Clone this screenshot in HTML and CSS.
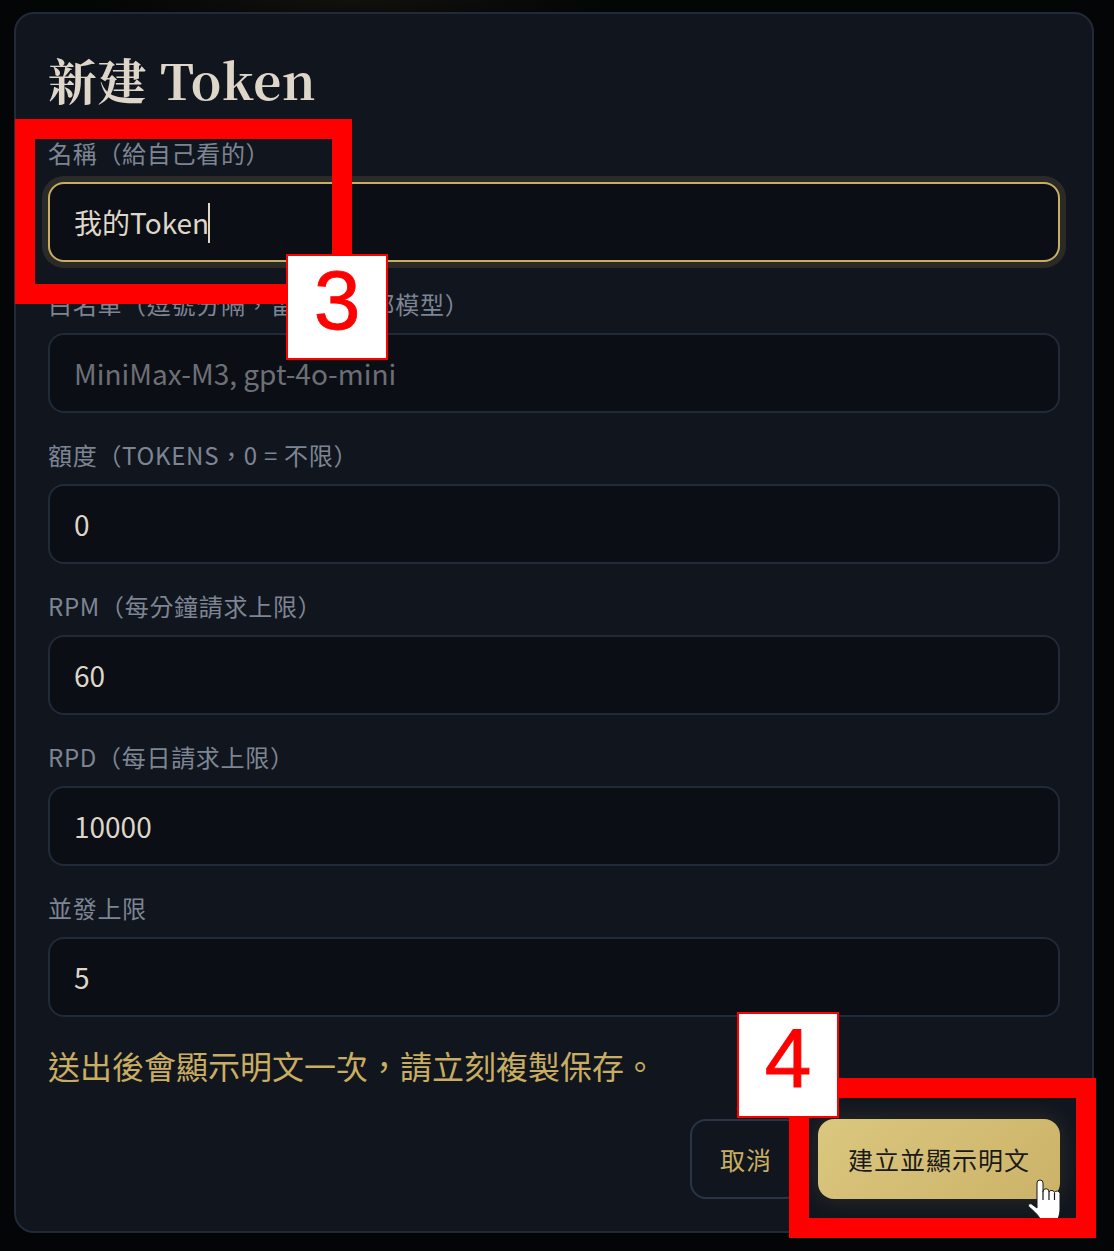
FILE: index.html
```html
<!DOCTYPE html>
<html lang="zh-TW">
<head>
<meta charset="utf-8">
<title>新建 Token</title>
<link rel="stylesheet" href="styles.css">
</head>
<body>
<main class="panel">
  <h1 class="title">新建 Token</h1>
  <div class="field">
    <label class="label">名稱（給自己看的）</label>
    <div class="input input-focus">我的Token<span class="caret"></span></div>
  </div>
  <div class="field">
    <label class="label">白名單（逗號分隔，留空 = 全部模型）</label>
    <input class="input" placeholder="MiniMax-M3, gpt-4o-mini">
  </div>
  <div class="field">
    <label class="label">額度（tokens，0 = 不限）</label>
    <input class="input" value="0">
  </div>
  <div class="field">
    <label class="label">RPM（每分鐘請求上限）</label>
    <input class="input" value="60">
  </div>
  <div class="field">
    <label class="label">RPD（每日請求上限）</label>
    <input class="input" value="10000">
  </div>
  <div class="field">
    <label class="label">並發上限</label>
    <input class="input" value="5">
  </div>
  <p class="note">送出後會顯示明文一次，請立刻複製保存。</p>
  <div class="actions">
    <button class="btn btn-ghost">取消</button>
    <button class="btn btn-primary">建立並顯示明文</button>
  </div>
</main>
<svg class="hand" viewBox="0 0 34 40" aria-hidden="true">
  <path d="M10 4a3 3 0 0 1 6 0v8.5a3 3 0 0 1 6 .5a3 3 0 0 1 5.5 .5a3 3 0 0 1 5.5 1V30c0 4-1 7-2 10H13c-1-3-5-7-11-12c-1.500-2 .5-4 2.500-3L10 29Z" fill="#fff" stroke="#15171b" stroke-width="1"/>
  <path d="M16 12v9M22 13v8M27.500 14v7" fill="none" stroke="#15171b" stroke-width="1.200"/>
</svg>
<div class="mark mark-3"></div>
<div class="badge badge-3">3</div>
<div class="mark mark-4"></div>
<div class="badge badge-4">4</div>
</body>
</html>
```
FILE: styles.css
```css
* { box-sizing: border-box; }
html, body { margin: 0; height: 1251px; overflow: hidden; }
body {
  position: relative;
  background:
    radial-gradient(ellipse 260px 30px at 350px 0, rgba(201, 173, 98, .07), transparent),
    #040507;
  font-family: "Noto Sans CJK TC", "Noto Sans", sans-serif;
  text-spacing-trim: space-all;
}
.panel {
  width: 1080px;
  height: 1221px;
  margin: 12px 0 0 14px;
  padding: 35px 32px 0;
  background: #11161e;
  border: 2px solid #202a38;
  border-radius: 20px;
}
.title {
  margin: 0 0 26px;
  height: 60px;
  line-height: 60px;
  font-family: "Noto Serif CJK TC", "Liberation Serif", serif;
  font-size: 49px;
  font-weight: 700;
  letter-spacing: 0.6px;
  color: #ddd6c9;
}
.field { margin-bottom: 24px; }
.label {
  display: block;
  height: 36px;
  line-height: 36px;
  margin-bottom: 11px;
  font-size: 24px;
  letter-spacing: 0.7px;
  text-transform: uppercase;
  color: #7d8594;
}
.input {
  display: block;
  width: 100%;
  height: 80px;
  padding: 0 24px;
  line-height: 76px;
  font-family: inherit;
  font-size: 28px;
  color: #ddd6c9;
  background: #0b0e14;
  border: 2px solid #202a38;
  border-radius: 16px;
  outline: none;
}
.input::placeholder { color: #6c7076; opacity: 1; }
.input-focus {
  border-color: #c9ad62;
  box-shadow: 0 0 0 6px rgba(201, 173, 98, .14);
}
.caret {
  display: inline-block;
  width: 2px;
  height: 40px;
  margin-left: -1px;
  vertical-align: -9px;
  background: #ddd6c9;
}
.note {
  margin: -1px 0 0;
  height: 50px;
  line-height: 50px;
  font-size: 32px;
  color: #c9ad62;
}
.actions {
  display: flex;
  justify-content: flex-end;
  gap: 16px;
  margin-top: 29px;
}
.btn {
  height: 80px;
  padding: 0 28px;
  font-family: inherit;
  font-size: 25px;
  letter-spacing: 1px;
  border-radius: 16px;
  border: 2px solid transparent;
}
.btn-ghost {
  background: transparent;
  border-color: #2a3545;
  color: #c9ad62;
}
.btn-primary {
  color: #1a1a18;
  background: linear-gradient(135deg, #dbc77e, #ccb269) border-box;
  box-shadow: 0 0 24px rgba(201, 173, 98, .16);
}
.hand {
  position: absolute;
  left: 1027px;
  top: 1179px;
  width: 34px;
  height: 40px;
}
.mark {
  position: absolute;
  border: 20px solid #f00;
}
.mark-3 { left: 15px; top: 119px; width: 337px; height: 185px; }
.mark-4 { left: 789px; top: 1078px; width: 307px; height: 160px; }
.badge {
  position: absolute;
  width: 102px;
  height: 106px;
  background: #fff;
  border: 2px solid #f00;
  color: #f00;
  font-family: "Liberation Sans", Arial, sans-serif;
  font-size: 84px;
  line-height: 89px;
  text-align: center;
  -webkit-text-stroke: 0.8px #f00;
}
.badge-3 { left: 286px; top: 254px; }
.badge-4 { left: 737px; top: 1012px; }
```
